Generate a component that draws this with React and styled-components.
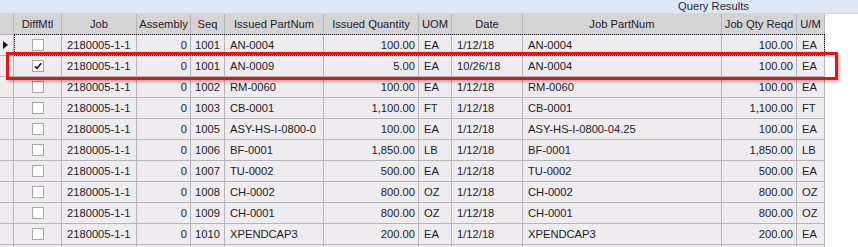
import React from 'react';
import styled, { createGlobalStyle, css } from 'styled-components';

const GlobalStyle = createGlobalStyle`
  html, body {
    margin: 0;
    padding: 0;
    background: #fff;
  }
  body {
    font-family: 'Liberation Sans', Arial, sans-serif;
    font-size: 11.2px;
    color: #1b1b24;
  }
`;

const COLS = [14, 48, 75, 54, 34, 99, 95, 33, 71, 199, 75, 28];

const Panel = styled.div`
  width: 858px;
  height: 247px;
  overflow: hidden;
  background: #fff;
`;

const TitleBar = styled.div`
  height: 14px;
  box-sizing: border-box;
  background: #dce8f4;
  border-bottom: 1px solid #c9d6e3;
  padding-left: 678px;
  line-height: 13px;
  color: #1e2a38;
  white-space: nowrap;
`;

const Body = styled.div`
  position: relative;
`;

const Grid = styled.div`
  width: 825px;
`;

const Row = styled.div`
  position: relative;
  display: grid;
  grid-template-columns: ${COLS.map((w) => w + 'px').join(' ')};
  height: 21px;
  box-sizing: border-box;
  border-bottom: 1px solid #b6b4b8;
  background: ${({ $head }) => ($head ? '#d4d4d4' : '#efecef')};
  ${({ $focused }) =>
    $focused &&
    css`
      &::after {
        content: '';
        position: absolute;
        left: 14px;
        right: 0;
        top: -1px;
        bottom: -1px;
        border: 1px dotted #000;
        pointer-events: none;
      }
    `}
`;

const Cell = styled.div`
  box-sizing: border-box;
  border-right: 1px solid #b6b4b8;
  padding: 0 ${({ $align }) => ($align === 'right' ? '3px' : '5px')};
  line-height: 20px;
  white-space: nowrap;
  overflow: hidden;
  display: flex;
  align-items: center;
  justify-content: ${({ $align }) =>
    $align === 'right' ? 'flex-end' : $align === 'center' ? 'center' : 'flex-start'};
`;

const HeadCell = styled(Cell)`
  justify-content: center;
  padding: 0 2px;
  color: #22202c;
`;

const RowHead = styled.div`
  box-sizing: border-box;
  border-right: 1px solid #b6b4b8;
  display: flex;
  align-items: center;
  padding-left: 3px;
`;

const Pointer = styled.span`
  width: 0;
  height: 0;
  border-top: 4px solid transparent;
  border-bottom: 4px solid transparent;
  border-left: 5px solid #111;
`;

const Box = styled.span`
  width: 12px;
  height: 12px;
  box-sizing: border-box;
  border: 1px solid #a7a7a7;
  background: #fff;
  display: flex;
  align-items: center;
  justify-content: center;
`;

// red annotation frame drawn over the second data row
const Highlight = styled.div`
  position: absolute;
  left: 6px;
  top: 38px;
  width: 832px;
  height: 28px;
  box-sizing: border-box;
  border: 3px solid #ee1111;
  box-shadow: 2px 2px 3px rgba(0, 0, 0, 0.28);
  pointer-events: none;
`;

const headers = [
  '', 'DiffMtl', 'Job', 'Assembly', 'Seq', 'Issued PartNum', 'Issued Quantity',
  'UOM', 'Date', 'Job PartNum', 'Job Qty Reqd', 'U/M',
];

const rows = [
  [false, '1001', 'AN-0004', '100.00', 'EA', '1/12/18', 'AN-0004', '100.00', 'EA'],
  [true, '1001', 'AN-0009', '5.00', 'EA', '10/26/18', 'AN-0004', '100.00', 'EA'],
  [false, '1002', 'RM-0060', '100.00', 'EA', '1/12/18', 'RM-0060', '100.00', 'EA'],
  [false, '1003', 'CB-0001', '1,100.00', 'FT', '1/12/18', 'CB-0001', '1,100.00', 'FT'],
  [false, '1005', 'ASY-HS-I-0800-0', '100.00', 'EA', '1/12/18', 'ASY-HS-I-0800-04.25', '100.00', 'EA'],
  [false, '1006', 'BF-0001', '1,850.00', 'LB', '1/12/18', 'BF-0001', '1,850.00', 'LB'],
  [false, '1007', 'TU-0002', '500.00', 'EA', '1/12/18', 'TU-0002', '500.00', 'EA'],
  [false, '1008', 'CH-0002', '800.00', 'OZ', '1/12/18', 'CH-0002', '800.00', 'OZ'],
  [false, '1009', 'CH-0001', '800.00', 'OZ', '1/12/18', 'CH-0001', '800.00', 'OZ'],
  [false, '1010', 'XPENDCAP3', '200.00', 'EA', '1/12/18', 'XPENDCAP3', '200.00', 'EA'],
];

function Check({ checked }) {
  return (
    <Box>
      {checked && (
        <svg width="8" height="8" viewBox="0 0 8 8">
          <path d="M0.8 4.2 L3 6.4 L7.2 1.2" fill="none" stroke="#111" strokeWidth="1.6" />
        </svg>
      )}
    </Box>
  );
}

export default function App() {
  return (
    <>
      <GlobalStyle />
      <Panel>
        <TitleBar>Query Results</TitleBar>
        <Body>
          <Grid>
            <Row $head>
              {headers.map((h, i) =>
                i === 0 ? <RowHead key={i} /> : <HeadCell key={i}>{h}</HeadCell>
              )}
            </Row>
            {rows.map((r, i) => {
              const [checked, seq, part, qty, uom, date, jobPart, jobQty, um] = r;
              return (
                <Row key={i} $focused={i === 0}>
                  <RowHead>{i === 0 && <Pointer />}</RowHead>
                  <Cell $align="center">
                    <Check checked={checked} />
                  </Cell>
                  <Cell>2180005-1-1</Cell>
                  <Cell $align="right">0</Cell>
                  <Cell $align="center">{seq}</Cell>
                  <Cell>{part}</Cell>
                  <Cell $align="right">{qty}</Cell>
                  <Cell>{uom}</Cell>
                  <Cell>{date}</Cell>
                  <Cell>{jobPart}</Cell>
                  <Cell $align="right">{jobQty}</Cell>
                  <Cell>{um}</Cell>
                </Row>
              );
            })}
            <Row>
              <RowHead />
              {COLS.slice(1).map((_, i) => (
                <Cell key={i} />
              ))}
            </Row>
          </Grid>
          <Highlight />
        </Body>
      </Panel>
    </>
  );
}
